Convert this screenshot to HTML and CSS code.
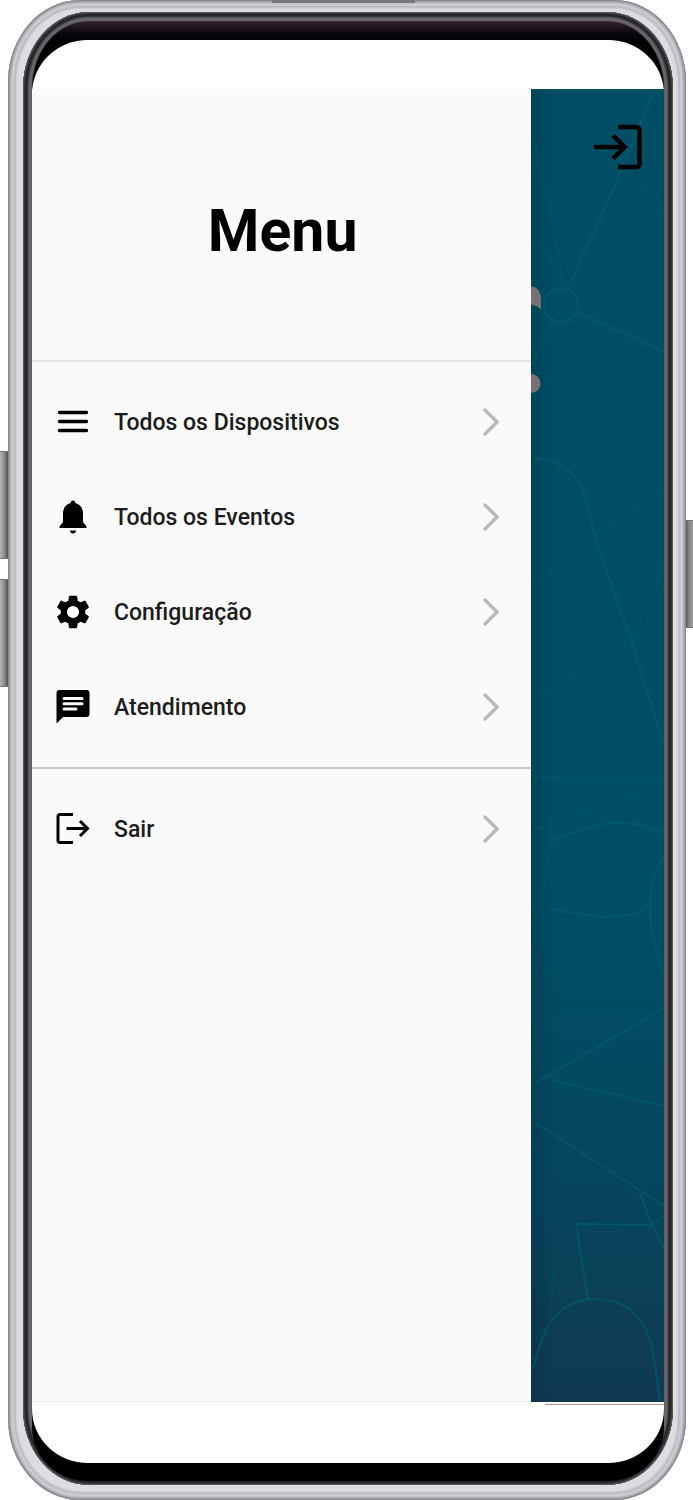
FILE: index.html
```html
<!DOCTYPE html>
<html lang="pt-BR">
<head>
<meta charset="utf-8">
<meta name="viewport" content="width=device-width, initial-scale=1">
<title>Menu</title>
<link rel="stylesheet" href="styles.css">
</head>
<body>
<div class="stage">
  <span class="key key-volume-up"></span>
  <span class="key key-volume-down"></span>
  <span class="key key-power"></span>
  <div class="phone">
    <span class="speaker"></span>
    <div class="bezel">
      <div class="screen">
        <div class="app">
          <nav class="drawer" aria-label="Menu">
            <header class="drawer-header"><h1 class="drawer-title">Menu</h1></header>
            <ul class="menu">
              <li><a class="item" href="#">
                <svg class="icon" viewBox="0 0 34 34"><path d="M3.500 7.500h27M3.500 16.500h27M3.500 25.500h27" fill="none" stroke="#000" stroke-width="3.400" stroke-linecap="round"/></svg>
                <span class="label">Todos os Dispositivos</span>
                <svg class="chevron" viewBox="0 0 16 28"><path d="M2 2l12 12L2 26"/></svg>
              </a></li>
              <li><a class="item" href="#">
                <svg class="icon" viewBox="0 0 34 34"><path d="M17 .5c1.500 0 2.300 1 2.300 2.600C24 4.300 27 8.300 27 13v9l3.500 4.500V28h-27v-1.500L7 22v-9c0-4.700 3-8.700 7.700-9.900C14.700 1.500 15.500.5 17 .5zM14 30.500h6c0 1.800-1.300 3-3 3s-3-1.200-3-3z"/></svg>
                <span class="label">Todos os Eventos</span>
                <svg class="chevron" viewBox="0 0 16 28"><path d="M2 2l12 12L2 26"/></svg>
              </a></li>
              <li><a class="item" href="#">
                <svg class="icon" viewBox="2 2 20 20"><path d="M19.140 12.940c.04-.3.060-.61.060-.94 0-.32-.02-.64-.07-.94l2.030-1.580c.18-.14.230-.41.120-.61l-1.920-3.320c-.12-.22-.37-.29-.59-.22l-2.390.96c-.5-.38-1.030-.7-1.620-.94l-.36-2.540c-.04-.24-.24-.41-.48-.41h-3.840c-.24 0-.43.170-.47.410l-.36 2.540c-.59.240-1.130.570-1.620.940l-2.390-.96c-.22-.08-.47 0-.59.220L2.740 8.870c-.12.210-.08.470.12.610l2.030 1.580c-.05.3-.09.630-.09.940s.02.640.070.940l-2.030 1.580c-.18.140-.23.410-.12.610l1.920 3.320c.12.220.370.290.590.220l2.390-.96c.5.380 1.030.7 1.620.940l.36 2.540c.05.240.240.410.480.410h3.840c.24 0 .44-.17.470-.41l.36-2.540c.59-.24 1.130-.56 1.620-.94l2.390.96c.22.080.470 0 .59-.22l1.920-3.320c.12-.22.070-.47-.12-.61l-2.010-1.580zM12 15.600A3.600 3.600 0 1 1 12 8.400a3.600 3.600 0 0 1 0 7.200z"/></svg>
                <span class="label">Configuração</span>
                <svg class="chevron" viewBox="0 0 16 28"><path d="M2 2l12 12L2 26"/></svg>
              </a></li>
              <li><a class="item" href="#">
                <svg class="icon" viewBox="0 0 34 34"><path d="M3.500 0h27A3 3 0 0 1 33.500 3v21a3 3 0 0 1-3 3H7L.5 33.500V3a3 3 0 0 1 3-3z"/><path d="M8 8.500h18M8 13.700h18M8 19h12" fill="none" stroke="#fafafa" stroke-width="3" stroke-linecap="round"/></svg>
                <span class="label">Atendimento</span>
                <svg class="chevron" viewBox="0 0 16 28"><path d="M2 2l12 12L2 26"/></svg>
              </a></li>
            </ul>
            <ul class="menu menu-exit">
              <li><a class="item" href="#">
                <svg class="icon" viewBox="0 0 34 34"><g fill="none" stroke="#000" stroke-width="3"><path d="M17 2.500H4a2 2 0 0 0-2 2v24a2 2 0 0 0 2 2h13M10.500 16.500H31M24 9l7.500 7.500L24 24"/></g></svg>
                <span class="label">Sair</span>
                <svg class="chevron" viewBox="0 0 16 28"><path d="M2 2l12 12L2 26"/></svg>
              </a></li>
            </ul>
          </nav>
          <main class="home">
            <svg class="network" viewBox="0 0 133 1313" preserveAspectRatio="xMinYMin slice" aria-hidden="true">
              <g class="strong">
                <path d="M122 4L79 108L39 194"/>
                <circle cx="30" cy="216" r="17"/>
                <path d="M47 223L133 263"/>
                <path d="M2 369Q42 374 52 401C58 420 60 432 65 451L99 548L133 656"/>
                <path d="M19 753C50 740 66 734 89 734S120 740 133 744M19 819Q54 828 82 828Q102 828 117 817M133 766Q105 812 133 884"/>
                <path d="M4 994L133 919M20 991L133 1017M5 1034L133 1117"/>
                <path d="M108 1103L121 1136L133 1160M57 1210L45 1135L121 1136L133 1127"/>
                <path d="M2 1279Q12 1244 19 1233C31 1218 46 1210 65 1210S103 1218 115 1240Q122 1255 129 1312"/>
              </g>
              <g class="faint">
                <path d="M2 48L17 108L32 191L7 151M22 234L4 271M89 91L129 108M82 111L113 126Q122 130 133 124"/>
                <path d="M5 496L62 448L133 401M133 471L115 538M9 608L92 554L133 525M2 689H133"/>
                <path d="M4 741L133 694M45 694L19 736L12 819L4 831M27 844L58 890M22 1184L19 1230M22 1184L84 1170"/>
              </g>
              <path class="mark" d="M0 197Q10 199 10 210V221Q6 216 0 216zM0 285A9.500 9.500 0 0 1 0 304z"/>
            </svg>
            <button class="login" type="button" aria-label="Entrar">
              <svg class="login-icon" viewBox="0 0 48 46"><g fill="none" stroke="#000" stroke-width="4.500"><path d="M24 3h18.500a3 3 0 0 1 3 3v34a3 3 0 0 1-3 3H24M0 23h31M19 11.500L30.500 23L19 34.500"/></g></svg>
            </button>
          </main>
        </div>
      </div>
    </div>
  </div>
</div>
</body>
</html>
```

FILE: styles.css
```css
* { box-sizing: border-box; }

body {
  margin: 0;
  background: #fff;
  font-family: Roboto, "Liberation Sans", sans-serif;
}

.stage {
  position: relative;
  display: flex;
  min-height: 100vh;
  padding: 0 7px 0 8px;
}

.key {
  position: absolute;
  width: 12px;
  height: 108px;
  border-top: 1px solid #777;
  border-bottom: 1px solid #777;
}
.key-volume-up,
.key-volume-down {
  left: 0;
  background: linear-gradient(90deg, #b5b5b5, #8f8f8f 4px, #505050 8px);
}
.key-volume-up { top: 451px; }
.key-volume-down { top: 579px; }
.key-power {
  right: 0;
  top: 520px;
  background: linear-gradient(270deg, #9c9c9c, #858585 4px, #4c4c4c 8px);
}

.phone {
  position: relative;
  display: flex;
  flex: 1;
  padding: 12px 13px 15px 15px;
  border-radius: 72px / 82px;
  background: #dddce2;
  box-shadow:
    inset 0 0 1px 1px #88878b,
    inset 0 0 2px 3px #a3a2a8,
    inset 0 0 2px 6px #d2d1d8,
    inset 0 0 2px 8px #b5b4bb,
    inset 0 -4px 1px 0 #555357;
}

.speaker {
  position: absolute;
  top: 0;
  left: 39%;
  width: 21%;
  height: 3px;
  background: #777;
}

.bezel {
  display: flex;
  flex: 1;
  padding: 28px 9px 22px;
  border-radius: 66px / 76px;
  background: linear-gradient(#35242d 9px, #0b0810 21px, #000 30px);
  box-shadow:
    inset 0 0 2px 1px #6c6b70,
    inset 0 0 2px 5px #232325,
    inset 0 0 1px 9px #6b696e;
}

.screen {
  display: flex;
  flex: 1;
  padding: 49px 0 61px;
  border-radius: 56px / 54px;
  background: #fff;
  box-shadow: 0 18px 0 #000;
}

.app {
  display: flex;
  flex: 1;
}

.drawer {
  flex: 0 0 79%;
  background: #fafafa;
  border-bottom: 1px solid #f0f0f0;
}

.drawer-header {
  display: flex;
  align-items: center;
  justify-content: center;
  height: 273px;
  padding: 12px 0 0 2px;
  border-bottom: 2px solid #e6e6e6;
}

.drawer-title {
  margin: 0;
  font-size: 59px;
  line-height: 72px;
  font-weight: 700;
  color: #000;
}

.menu {
  margin: 0;
  padding: 12px 0 13px;
  list-style: none;
}
.menu-exit { border-top: 2px solid #c8c8c8; }

.item {
  display: flex;
  align-items: center;
  gap: 24px;
  height: 95px;
  padding: 0 32px 0 24px;
  color: #1c1c1c;
  text-decoration: none;
}

.icon {
  width: 34px;
  height: 34px;
}

.label {
  flex: 1;
  padding-top: 2px;
  font-size: 23px;
  line-height: 28px;
  font-weight: 500;
}

.chevron {
  width: 16px;
  height: 28px;
  fill: none;
  stroke: #b9b9b9;
  stroke-width: 3.4;
  stroke-linecap: round;
}

.home {
  position: relative;
  display: flex;
  flex: 1;
  align-items: flex-start;
  justify-content: flex-end;
  padding: 35px 22px 0 0;
  background:
    linear-gradient(90deg, rgba(0, 30, 45, 0.2), transparent 24px),
    linear-gradient(#004e64 0, #004e64 62%, #034a61 75%, #07445c 86%, #103a51 100%);
}
.home::after {
  content: "";
  position: absolute;
  top: calc(100% + 2px);
  right: 0;
  left: 14px;
  height: 1px;
  background: #999;
}

.network {
  position: absolute;
  inset: 0;
  width: 100%;
  height: 100%;
  fill: none;
  stroke: #006570;
}
.strong {
  stroke-width: 2;
  opacity: 0.5;
}
.faint {
  stroke-width: 2;
  opacity: 0.25;
}
.mark {
  fill: #777174;
  stroke: none;
}

.login {
  position: relative;
  display: flex;
  padding: 0;
  border: 0;
  background: none;
}
.login-icon {
  width: 48px;
  height: 46px;
}
```
